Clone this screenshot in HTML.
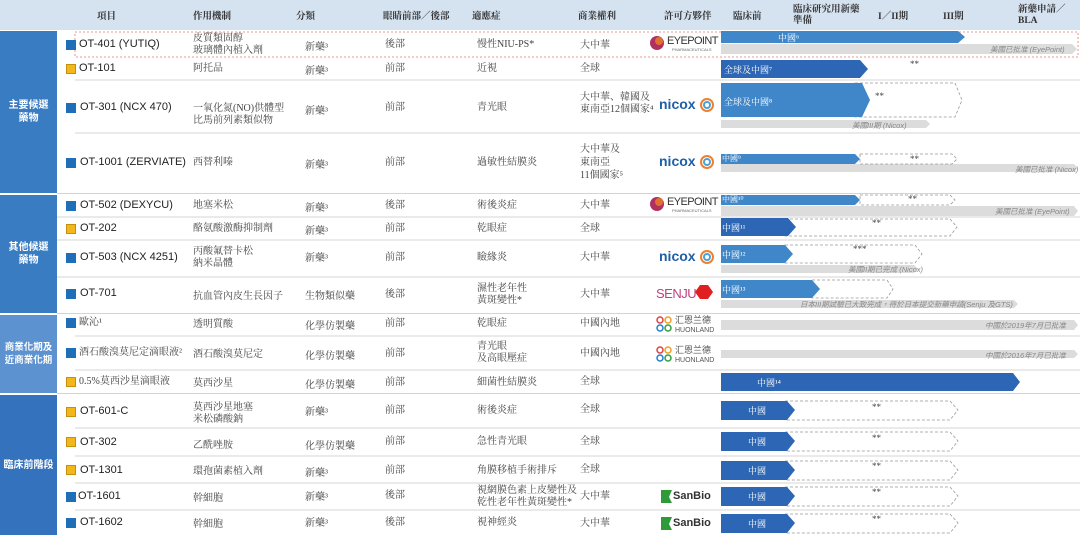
<!DOCTYPE html>
<html><head><meta charset="utf-8"><style>
*{margin:0;padding:0;box-sizing:border-box}
body{width:1080px;height:535px;overflow:hidden;background:#fff;position:relative;font-family:"Liberation Serif","Noto Serif CJK SC","Noto Sans CJK TC",serif;color:#444}
.t{position:absolute;font-size:10px;line-height:12px;white-space:nowrap}
.h{position:absolute;font-size:9.5px;line-height:11px;font-weight:bold;color:#333;white-space:nowrap}
.n{position:absolute;font-family:"Liberation Sans","Noto Sans CJK TC",sans-serif;font-size:11px;color:#222;white-space:nowrap}
.g{position:absolute;left:0;width:57px;color:#fff;font-weight:bold;font-size:10px;line-height:13px;text-align:center;font-family:"Liberation Sans","Noto Sans CJK TC",sans-serif;display:flex;align-items:center;justify-content:center}
.sq{position:absolute;width:10px;height:10px;left:66px}
.b{background:#1f6fb8}.y{background:#f3b71c;border:1px solid #c49010}
.w{position:absolute;color:#fff;font-size:9px;white-space:nowrap}
.gt{position:absolute;font-size:7.5px;color:#888;font-style:italic;white-space:nowrap;font-family:"Liberation Sans","Noto Sans CJK TC",sans-serif}
.lg{position:absolute;font-family:"Liberation Sans",sans-serif;white-space:nowrap}
</style></head><body>
<svg width="1080" height="535" style="position:absolute;left:0;top:0">
<rect x="0" y="0" width="1080" height="30" fill="#d5e2f0"/>
<rect x="0" y="31" width="57" height="162" fill="#3a7cc2"/>
<rect x="0" y="195" width="57" height="118" fill="#3a7cc2"/>
<rect x="0" y="315" width="57" height="78" fill="#5c92cf"/>
<rect x="0" y="395" width="57" height="140" fill="#3572bd"/>
<g stroke="#d4d4d4" stroke-width="1">
<line x1="75" y1="80" x2="1080" y2="80"/><line x1="75" y1="133" x2="1080" y2="133"/>
<line x1="57" y1="193.5" x2="1080" y2="193.5"/><line x1="57" y1="217" x2="1080" y2="217"/>
<line x1="57" y1="240" x2="1080" y2="240"/><line x1="57" y1="277" x2="1080" y2="277"/>
<line x1="57" y1="313.5" x2="1080" y2="313.5"/><line x1="75" y1="336" x2="1080" y2="336"/>
<line x1="75" y1="370" x2="1080" y2="370"/><line x1="57" y1="393.5" x2="1080" y2="393.5"/>
<line x1="75" y1="428" x2="1080" y2="428"/><line x1="75" y1="456" x2="1080" y2="456"/>
<line x1="75" y1="483" x2="1080" y2="483"/><line x1="75" y1="510" x2="1080" y2="510"/>
</g>
<rect x="75" y="32" width="1003" height="25" fill="none" stroke="#e07a7a" stroke-width="0.8" stroke-dasharray="2,2"/>
<g fill="#dcdcdc">
<polygon points="721,44 1072,44 1077,49 1072,54 721,54"/>
<polygon points="721,120 926,120 930,124 926,128 721,128"/>
<polygon points="721,164 1074,164 1078,168 1074,172 721,172"/>
<polygon points="721,206 1074,206 1078,211 1074,216 721,216"/>
<polygon points="721,265 914,265 918,269 914,273 721,273"/>
<polygon points="721,300 1014,300 1018,304 1014,308 721,308"/>
<polygon points="721,320 1074,320 1078,325 1074,330 721,330"/>
<polygon points="721,350 1074,350 1078,354 1074,358 721,358"/>
</g>
<g fill="none" stroke="#999" stroke-width="0.8" stroke-dasharray="3,2">
<polygon points="855,83 955,83 962,100 955,117 855,117"/>
<polygon points="860,154 952,154 957,159 952,164 860,164"/>
<polygon points="860,195 950,195 955,200 950,205 860,205"/>
<polygon points="785,219 950,219 957,227 950,236 785,236"/>
<polygon points="785,245 915,245 922,254 915,263 785,263"/>
<polygon points="812,280 887,280 893,289 887,298 812,298"/>
<polygon points="785,401 950,401 958,410 950,420 785,420"/>
<polygon points="785,432 950,432 958,441 950,451 785,451"/>
<polygon points="785,461 950,461 958,470 950,480 785,480"/>
<polygon points="785,487 950,487 958,496 950,506 785,506"/>
<polygon points="785,514 950,514 958,523 950,533 785,533"/>
</g>
<polygon points="721,31 958,31 965,37 958,43 721,43" fill="#3f87c9"/>
<polygon points="721,60 860,60 868,69 860,78 721,78" fill="#2c66b4"/>
<polygon points="721,83 862,83 870,100 862,117 721,117" fill="#3f87c9"/>
<polygon points="721,154 855,154 860,159 855,164 721,164" fill="#3f87c9"/>
<polygon points="721,195 855,195 860,200 855,205 721,205" fill="#3f87c9"/>
<polygon points="721,218 788,218 796,227 788,236 721,236" fill="#2c66b4"/>
<polygon points="721,245 785,245 793,254 785,263 721,263" fill="#3f87c9"/>
<polygon points="721,280 812,280 820,289 812,298 721,298" fill="#3f87c9"/>
<polygon points="721,373 1013,373 1020,382 1013,391 721,391" fill="#2c66b4"/>
<polygon points="721,401 787,401 795,410 787,420 721,420" fill="#2c66b4"/>
<polygon points="721,432 787,432 795,441 787,451 721,451" fill="#2c66b4"/>
<polygon points="721,461 787,461 795,470 787,480 721,480" fill="#2c66b4"/>
<polygon points="721,487 787,487 795,496 787,506 721,506" fill="#2c66b4"/>
<polygon points="721,514 787,514 795,523 787,533 721,533" fill="#2c66b4"/>
<g><circle cx="657" cy="43" r="7" fill="#b03060"/><circle cx="659" cy="41" r="4" fill="#e07030"/></g>
<g><circle cx="657" cy="204" r="7" fill="#b03060"/><circle cx="659" cy="202" r="4" fill="#e07030"/></g>
<g fill="none" stroke-width="2"><circle cx="707" cy="105" r="6" stroke="#f08030"/><circle cx="707" cy="105" r="3" stroke="#4aa3d8"/>
<circle cx="707" cy="162" r="6" stroke="#f08030"/><circle cx="707" cy="162" r="3" stroke="#4aa3d8"/>
<circle cx="707" cy="257" r="6" stroke="#f08030"/><circle cx="707" cy="257" r="3" stroke="#4aa3d8"/></g>
<polygon points="700,285 708,285 713,292 708,299 700,299 695,292" fill="#e02020"/>
<g fill="none" stroke-width="1.5"><circle cx="660" cy="320" r="3" stroke="#e04040"/><circle cx="668" cy="320" r="3" stroke="#f0a020"/><circle cx="660" cy="328" r="3" stroke="#2080d0"/><circle cx="668" cy="328" r="3" stroke="#30a040"/>
<circle cx="660" cy="350" r="3" stroke="#e04040"/><circle cx="668" cy="350" r="3" stroke="#f0a020"/><circle cx="660" cy="358" r="3" stroke="#2080d0"/><circle cx="668" cy="358" r="3" stroke="#30a040"/></g>
<polygon points="661,490 672,490 669,497 672,503 661,503" fill="#2e9a3a"/>
<polygon points="661,517 672,517 669,524 672,530 661,530" fill="#2e9a3a"/>
</svg>
<div class="h" style="left:97px;top:12px">項目</div>
<div class="h" style="left:193px;top:12px">作用機制</div>
<div class="h" style="left:296px;top:12px">分類</div>
<div class="h" style="left:383px;top:12px">眼睛前部／後部</div>
<div class="h" style="left:472px;top:12px">適應症</div>
<div class="h" style="left:578px;top:12px">商業權利</div>
<div class="h" style="left:664px;top:12px">許可方夥伴</div>
<div class="h" style="left:733px;top:12px">臨床前</div>
<div class="h" style="left:793px;top:5px">臨床研究用新藥<br>準備</div>
<div class="h" style="left:878px;top:12px">I／II期</div>
<div class="h" style="left:943px;top:12px">III期</div>
<div class="h" style="left:1018px;top:5px">新藥申請／<br>BLA</div>
<div class="g" style="top:31px;height:162px">主要候選<br>藥物</div>
<div class="g" style="top:195px;height:118px">其他候選<br>藥物</div>
<div class="g" style="top:315px;height:78px;font-size:9.5px">商業化期及<br>近商業化期</div>
<div class="g" style="top:395px;height:140px">臨床前階段</div>
<div class="sq b" style="top:40px"></div><div class="sq y" style="top:64px"></div>
<div class="sq b" style="top:103px"></div><div class="sq b" style="top:158px"></div>
<div class="sq b" style="top:201px"></div><div class="sq y" style="top:224px"></div>
<div class="sq b" style="top:253px"></div><div class="sq b" style="top:289px"></div>
<div class="sq b" style="top:318px"></div><div class="sq b" style="top:348px"></div>
<div class="sq y" style="top:377px"></div><div class="sq y" style="top:407px"></div>
<div class="sq y" style="top:437px"></div><div class="sq y" style="top:465px"></div>
<div class="sq b" style="top:492px"></div><div class="sq b" style="top:518px"></div>
<div class="n" style="left:79px;top:38px">OT-401 (YUTIQ)</div>
<div class="n" style="left:79px;top:62px">OT-101</div>
<div class="n" style="left:80px;top:101px">OT-301 (NCX 470)</div>
<div class="n" style="left:80px;top:156px">OT-1001 (ZERVIATE)</div>
<div class="n" style="left:80px;top:199px">OT-502 (DEXYCU)</div>
<div class="n" style="left:80px;top:222px">OT-202</div>
<div class="n" style="left:80px;top:251px">OT-503 (NCX 4251)</div>
<div class="n" style="left:80px;top:287px">OT-701</div>
<div class="t" style="left:79px;top:317px">歐沁¹</div>
<div class="t" style="left:79px;top:347px">酒石酸溴莫尼定滴眼液²</div>
<div class="t" style="left:79px;top:376px">0.5%莫西沙星滴眼液</div>
<div class="n" style="left:80px;top:405px">OT-601-C</div>
<div class="n" style="left:80px;top:436px">OT-302</div>
<div class="n" style="left:80px;top:464px">OT-1301</div>
<div class="n" style="left:78px;top:490px">OT-1601</div>
<div class="n" style="left:80px;top:516px">OT-1602</div>
<div class="t" style="left:193px;top:33px">皮質類固醇<br>玻璃體內植入劑</div>
<div class="t" style="left:193px;top:63px">阿托品</div>
<div class="t" style="left:193px;top:103px">一氧化氮(NO)供體型<br>比馬前列素類似物</div>
<div class="t" style="left:193px;top:157px">西替利嗪</div>
<div class="t" style="left:193px;top:200px">地塞米松</div>
<div class="t" style="left:193px;top:223px">酪氨酸激酶抑制劑</div>
<div class="t" style="left:193px;top:246px">丙酸氟替卡松<br>納米晶體</div>
<div class="t" style="left:193px;top:291px">抗血管內皮生長因子</div>
<div class="t" style="left:193px;top:319px">透明質酸</div>
<div class="t" style="left:193px;top:349px">酒石酸溴莫尼定</div>
<div class="t" style="left:193px;top:378px">莫西沙星</div>
<div class="t" style="left:193px;top:402px">莫西沙星地塞<br>米松磷酸鈉</div>
<div class="t" style="left:193px;top:440px">乙酰唑胺</div>
<div class="t" style="left:193px;top:466px">環孢菌素植入劑</div>
<div class="t" style="left:193px;top:493px">幹細胞</div>
<div class="t" style="left:193px;top:519px">幹細胞</div>
<div class="t" style="left:305px;top:42px">新藥³</div><div class="t" style="left:305px;top:66px">新藥³</div>
<div class="t" style="left:305px;top:106px">新藥³</div><div class="t" style="left:305px;top:160px">新藥³</div>
<div class="t" style="left:305px;top:203px">新藥³</div><div class="t" style="left:305px;top:226px">新藥³</div>
<div class="t" style="left:305px;top:253px">新藥³</div><div class="t" style="left:305px;top:291px">生物類似藥</div>
<div class="t" style="left:305px;top:321px">化學仿製藥</div><div class="t" style="left:305px;top:351px">化學仿製藥</div>
<div class="t" style="left:305px;top:380px">化學仿製藥</div><div class="t" style="left:305px;top:407px">新藥³</div>
<div class="t" style="left:305px;top:441px">化學仿製藥</div><div class="t" style="left:305px;top:468px">新藥³</div>
<div class="t" style="left:305px;top:492px">新藥³</div><div class="t" style="left:305px;top:518px">新藥³</div>
<div class="t" style="left:385px;top:39px">後部</div><div class="t" style="left:385px;top:63px">前部</div>
<div class="t" style="left:385px;top:102px">前部</div><div class="t" style="left:385px;top:157px">前部</div>
<div class="t" style="left:385px;top:200px">後部</div><div class="t" style="left:385px;top:223px">前部</div>
<div class="t" style="left:385px;top:252px">前部</div><div class="t" style="left:385px;top:289px">後部</div>
<div class="t" style="left:385px;top:318px">前部</div><div class="t" style="left:385px;top:348px">前部</div>
<div class="t" style="left:385px;top:377px">前部</div><div class="t" style="left:385px;top:405px">前部</div>
<div class="t" style="left:385px;top:436px">前部</div><div class="t" style="left:385px;top:465px">前部</div>
<div class="t" style="left:385px;top:490px">後部</div><div class="t" style="left:385px;top:517px">後部</div>
<div class="t" style="left:477px;top:39px">慢性NIU-PS*</div>
<div class="t" style="left:477px;top:63px">近視</div>
<div class="t" style="left:477px;top:102px">青光眼</div>
<div class="t" style="left:477px;top:157px">過敏性結膜炎</div>
<div class="t" style="left:477px;top:200px">術後炎症</div>
<div class="t" style="left:477px;top:223px">乾眼症</div>
<div class="t" style="left:477px;top:252px">瞼緣炎</div>
<div class="t" style="left:477px;top:283px">濕性老年性<br>黃斑變性*</div>
<div class="t" style="left:477px;top:318px">乾眼症</div>
<div class="t" style="left:477px;top:341px">青光眼<br>及高眼壓症</div>
<div class="t" style="left:477px;top:377px">細菌性結膜炎</div>
<div class="t" style="left:477px;top:405px">術後炎症</div>
<div class="t" style="left:477px;top:436px">急性青光眼</div>
<div class="t" style="left:477px;top:465px">角膜移植手術排斥</div>
<div class="t" style="left:477px;top:485px">視網膜色素上皮變性及<br>乾性老年性黃斑變性*</div>
<div class="t" style="left:477px;top:517px">視神經炎</div>
<div class="t" style="left:580px;top:40px">大中華</div>
<div class="t" style="left:580px;top:63px">全球</div>
<div class="t" style="left:580px;top:92px">大中華、韓國及<br>東南亞12個國家⁴</div>
<div class="t" style="left:580px;top:143px;line-height:13px">大中華及<br>東南亞<br>11個國家⁵</div>
<div class="t" style="left:580px;top:200px">大中華</div>
<div class="t" style="left:580px;top:223px">全球</div>
<div class="t" style="left:580px;top:252px">大中華</div>
<div class="t" style="left:580px;top:289px">大中華</div>
<div class="t" style="left:580px;top:318px">中國內地</div>
<div class="t" style="left:580px;top:348px">中國內地</div>
<div class="t" style="left:580px;top:376px">全球</div>
<div class="t" style="left:580px;top:404px">全球</div>
<div class="t" style="left:580px;top:436px">全球</div>
<div class="t" style="left:580px;top:464px">全球</div>
<div class="t" style="left:580px;top:491px">大中華</div>
<div class="t" style="left:580px;top:518px">大中華</div>
<div class="lg" style="left:667px;top:35px;font-size:11px;color:#333;letter-spacing:-0.6px">EYEPOINT</div>
<div class="lg" style="left:672px;top:47px;font-size:4px;color:#666">PHARMACEUTICALS</div>
<div class="lg" style="left:667px;top:196px;font-size:11px;color:#333;letter-spacing:-0.6px">EYEPOINT</div>
<div class="lg" style="left:672px;top:208px;font-size:4px;color:#666">PHARMACEUTICALS</div>
<div class="lg" style="left:659px;top:96px;font-size:14px;color:#1f5fa8;font-weight:bold">nicox</div>
<div class="lg" style="left:659px;top:153px;font-size:14px;color:#1f5fa8;font-weight:bold">nicox</div>
<div class="lg" style="left:659px;top:248px;font-size:14px;color:#1f5fa8;font-weight:bold">nicox</div>
<div class="lg" style="left:656px;top:286px;font-size:13px;color:#c04080;letter-spacing:-0.5px">SENJU</div>
<div class="lg" style="left:675px;top:316px;font-size:9px;color:#555;line-height:9px">汇恩兰德<br><span style="font-size:7px">HUONLAND</span></div>
<div class="lg" style="left:675px;top:346px;font-size:9px;color:#555;line-height:9px">汇恩兰德<br><span style="font-size:7px">HUONLAND</span></div>
<div class="lg" style="left:673px;top:490px;font-size:11px;color:#333;font-weight:bold">SanBio</div>
<div class="lg" style="left:673px;top:517px;font-size:11px;color:#333;font-weight:bold">SanBio</div>
<div class="w" style="left:778px;top:31px">中國⁶</div>
<div class="w" style="left:724px;top:63px">全球及中國⁷</div>
<div class="w" style="left:724px;top:95px">全球及中國⁸</div>
<div class="w" style="left:722px;top:153px;font-size:8px">中國⁹</div>
<div class="w" style="left:722px;top:194px;font-size:8px">中國¹⁰</div>
<div class="w" style="left:722px;top:221px">中國¹¹</div>
<div class="w" style="left:722px;top:248px">中國¹²</div>
<div class="w" style="left:722px;top:283px">中國¹³</div>
<div class="w" style="left:757px;top:376px">中國¹⁴</div>
<div class="w" style="left:748px;top:404px">中國</div>
<div class="w" style="left:748px;top:435px">中國</div>
<div class="w" style="left:748px;top:464px">中國</div>
<div class="w" style="left:748px;top:490px">中國</div>
<div class="w" style="left:748px;top:517px">中國</div>
<div class="gt" style="left:990px;top:44px">美國已批准 (EyePoint)</div>
<div class="gt" style="left:852px;top:120px">美國III期 (Nicox)</div>
<div class="gt" style="left:1015px;top:164px">美國已批准 (Nicox)</div>
<div class="gt" style="left:995px;top:206px">美國已批准 (EyePoint)</div>
<div class="gt" style="left:848px;top:264px">美國II期已完成 (Nicox)</div>
<div class="gt" style="left:800px;top:299px">日本III期試驗已大致完成，待於日本提交新藥申請(Senju 及GTS)</div>
<div class="gt" style="left:985px;top:320px">中國於2019年7月已批准</div>
<div class="gt" style="left:985px;top:350px">中國於2016年7月已批准</div>
<div class="t" style="left:910px;top:58px;font-size:9px">**</div>
<div class="t" style="left:875px;top:90px;font-size:9px">**</div>
<div class="t" style="left:910px;top:153px;font-size:9px">**</div>
<div class="t" style="left:908px;top:193px;font-size:9px">**</div>
<div class="t" style="left:872px;top:217px;font-size:9px">**</div>
<div class="t" style="left:853px;top:243px;font-size:9px">***</div>
<div class="t" style="left:872px;top:401px;font-size:9px">**</div>
<div class="t" style="left:872px;top:432px;font-size:9px">**</div>
<div class="t" style="left:872px;top:460px;font-size:9px">**</div>
<div class="t" style="left:872px;top:486px;font-size:9px">**</div>
<div class="t" style="left:872px;top:513px;font-size:9px">**</div>
</body></html>
